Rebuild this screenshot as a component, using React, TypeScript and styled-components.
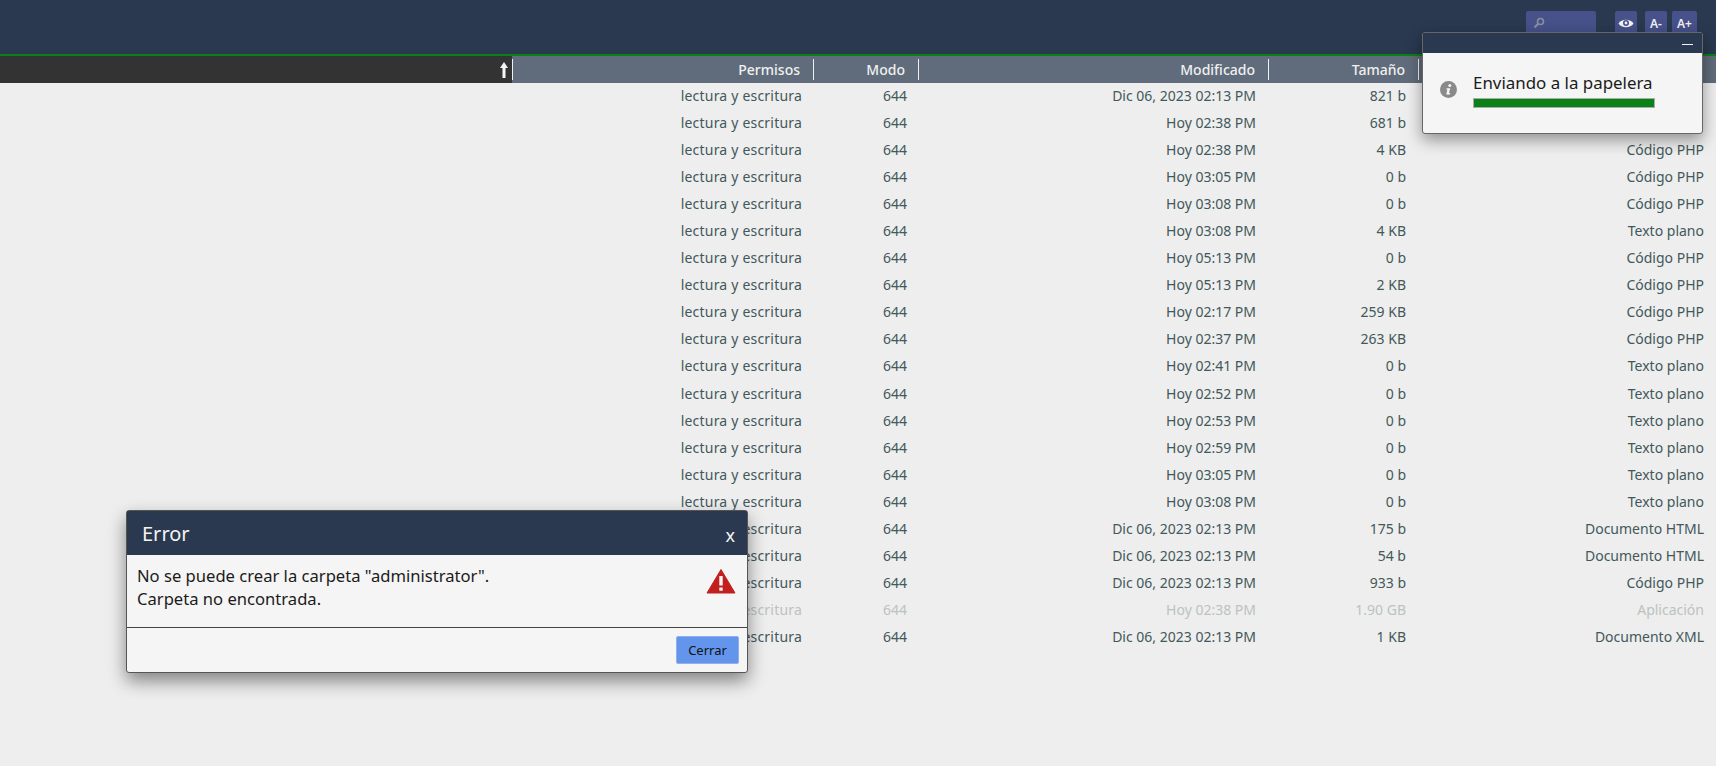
import React from 'react';
import styled, { createGlobalStyle } from 'styled-components';

const GlobalStyle = createGlobalStyle`
  html, body {
    margin: 0;
    padding: 0;
    height: 100%;
    background: #eeeeee;
    font-family: 'Noto Sans', sans-serif;
    overflow: hidden;
  }
`;

const Page = styled.div`
  position: relative;
  width: 1716px;
  height: 766px;
  overflow: hidden;
  background: #eeeeee;
`;

const TopBar = styled.div`
  display: flex;
  justify-content: flex-end;
  align-items: flex-start;
  height: 56px;
  padding: 11px 19px 0 0;
  box-sizing: border-box;
  background: #2a3950;
  border-bottom: 2px solid #0b8016;
`;

const SearchBox = styled.div`
  display: flex;
  align-items: center;
  width: 70px;
  height: 24px;
  padding-left: 7px;
  box-sizing: border-box;
  margin-right: 19px;
  background: #47518a;
  border-radius: 2px;
`;

const ToolButton = styled.div<{ $gap?: number; $w?: number }>`
  display: flex;
  align-items: center;
  justify-content: center;
  width: ${p => p.$w ?? 22}px;
  height: 24px;
  margin-right: ${p => p.$gap ?? 5}px;
  background: #47518a;
  border-radius: 2px;
  color: #f2f2f2;
  font-size: 12px;
  font-weight: 600;
`;

const HeaderRow = styled.div`
  display: flex;
  height: 27px;
`;

const NameHead = styled.div`
  display: flex;
  align-items: center;
  justify-content: flex-end;
  width: 512px;
  box-sizing: border-box;
  padding-right: 4px;
  background: #333333;
`;

const HeadCell = styled.div<{ $w: number }>`
  position: relative;
  width: ${p => p.$w}px;
  box-sizing: border-box;
  padding-right: 13px;
  text-align: right;
  line-height: 27px;
  background: #606c7b;
  color: #f0f0f0;
  font-size: 14px;
  font-weight: 500;
  &::before {
    content: '';
    position: absolute;
    left: 0;
    top: 3px;
    bottom: 3px;
    width: 1px;
    background: #f0f0f0;
  }
`;

const Row = styled.div<{ $faded?: boolean }>`
  display: flex;
  height: 27.05px;
  color: ${p => (p.$faded ? '#bcc2c1' : '#42585a')};
  font-size: 14px;
  line-height: 25px;
`;

const Spacer = styled.div`
  width: 512px;
`;

const Cell = styled.div<{ $w: number; $pad?: number }>`
  width: ${p => p.$w}px;
  box-sizing: border-box;
  padding-right: ${p => p.$pad ?? 12}px;
  text-align: right;
`;

const PermCell = styled(Cell)`
  letter-spacing: 0.2px;
`;

const Dialog = styled.div`
  position: absolute;
  left: 126px;
  top: 510px;
  width: 620px;
  background: #f5f5f5;
  border: 1px solid #555;
  border-radius: 3px;
  box-shadow: 0 8px 18px rgba(0, 0, 0, 0.45);
`;

const DialogTitle = styled.div`
  display: flex;
  justify-content: space-between;
  align-items: center;
  height: 44px;
  padding: 0 12px 0 15px;
  background: #2a3950;
  color: #f4f4f4;
  font-size: 20px;
`;

const CloseMark = styled.span`
  font-size: 18px;
  line-height: 18px;
  margin-top: 4px;
`;

const DialogBody = styled.div`
  display: flex;
  justify-content: space-between;
  height: 73px;
  padding: 9px 11px 0 10px;
  box-sizing: border-box;
  border-bottom: 1px solid #444;
  color: #1b1b1b;
  font-size: 16.6px;
  line-height: 23px;
`;

const WarnIcon = styled.svg`
  margin-top: 4px;
`;

const DialogFoot = styled.div`
  display: flex;
  justify-content: flex-end;
  padding: 8px 8px 8px 0;
`;

const CloseButton = styled.button`
  width: 63px;
  height: 28px;
  padding: 0;
  background: #6495ed;
  border: 1px solid #8fb0ea;
  border-radius: 2px;
  color: #111;
  font: 13px 'Noto Sans', sans-serif;
`;

const Toast = styled.div`
  position: absolute;
  left: 1422px;
  top: 32px;
  width: 281px;
  height: 102px;
  box-sizing: border-box;
  background: #f5f5f5;
  border: 1px solid #666;
  border-radius: 3px;
  box-shadow: 0 6px 16px rgba(0, 0, 0, 0.4);
`;

const ToastHead = styled.div`
  display: flex;
  justify-content: flex-end;
  align-items: center;
  height: 20px;
  padding: 2px 9px 0 0;
  box-sizing: border-box;
  background: #2a3950;
`;

const MinusBar = styled.div`
  width: 11px;
  height: 1px;
  background: #f4f4f4;
`;

const ToastBody = styled.div`
  display: flex;
  align-items: center;
  padding: 18px 0 0 17px;
`;

const ToastText = styled.div`
  margin-left: 16px;
  color: #1b1b1b;
  font-size: 16.9px;
  line-height: 23px;
`;

const Progress = styled.div`
  width: 182px;
  height: 10px;
  margin-top: 4px;
  box-sizing: border-box;
  background: #0b8016;
  border: 1px solid #aaa;
`;

const HeadLabels: [string, number][] = [
  ['Permisos', 301],
  ['Modo', 105],
  ['Modificado', 350],
  ['Tamaño', 150],
];

const rows: [string, string, string, boolean?][] = [
  ['Dic 06, 2023 02:13 PM', '821 b', ''],
  ['Hoy 02:38 PM', '681 b', ''],
  ['Hoy 02:38 PM', '4 KB', 'Código PHP'],
  ['Hoy 03:05 PM', '0 b', 'Código PHP'],
  ['Hoy 03:08 PM', '0 b', 'Código PHP'],
  ['Hoy 03:08 PM', '4 KB', 'Texto plano'],
  ['Hoy 05:13 PM', '0 b', 'Código PHP'],
  ['Hoy 05:13 PM', '2 KB', 'Código PHP'],
  ['Hoy 02:17 PM', '259 KB', 'Código PHP'],
  ['Hoy 02:37 PM', '263 KB', 'Código PHP'],
  ['Hoy 02:41 PM', '0 b', 'Texto plano'],
  ['Hoy 02:52 PM', '0 b', 'Texto plano'],
  ['Hoy 02:53 PM', '0 b', 'Texto plano'],
  ['Hoy 02:59 PM', '0 b', 'Texto plano'],
  ['Hoy 03:05 PM', '0 b', 'Texto plano'],
  ['Hoy 03:08 PM', '0 b', 'Texto plano'],
  ['Dic 06, 2023 02:13 PM', '175 b', 'Documento HTML'],
  ['Dic 06, 2023 02:13 PM', '54 b', 'Documento HTML'],
  ['Dic 06, 2023 02:13 PM', '933 b', 'Código PHP'],
  ['Hoy 02:38 PM', '1.90 GB', 'Aplicación', true],
  ['Dic 06, 2023 02:13 PM', '1 KB', 'Documento XML'],
];

const App: React.FC = () => {
  return (
    <Page>
      <GlobalStyle />
      <TopBar>
        <SearchBox>
          <svg width="12" height="12" viewBox="0 0 12 12" fill="none" stroke="#8a8f9e">
            <circle cx="7.5" cy="4.5" r="3" strokeWidth="1.6" />
            <path d="M5.2 6.8 L1.5 10.5" strokeWidth="2.2" />
          </svg>
        </SearchBox>
        <ToolButton $gap={8}>
          <svg width="16" height="11" viewBox="0 0 16 11">
            <path d="M0.5 5.5 C3.5 0.5 12.5 0.5 15.5 5.5 C12.5 10.5 3.5 10.5 0.5 5.5 Z" fill="#f2f2f2" />
            <circle cx="8" cy="5" r="3" fill="#47518a" />
            <circle cx="8" cy="5" r="1.4" fill="#f2f2f2" />
          </svg>
        </ToolButton>
        <ToolButton>A-</ToolButton>
        <ToolButton $w={25} $gap={0}>A+</ToolButton>
      </TopBar>
      <HeaderRow>
        <NameHead>
          <svg width="8" height="16" viewBox="0 0 8 16">
            <path d="M4 0 L8 6 H5.5 V16 H2.5 V6 H0 Z" fill="#f5f5f5" />
          </svg>
        </NameHead>
        {HeadLabels.map(([label, w]) => (
          <HeadCell key={label} $w={w}>
            {label}
          </HeadCell>
        ))}
        <HeadCell $w={298} />
      </HeaderRow>
      {rows.map((r, i) => (
        <Row key={i} $faded={r[3]}>
          <Spacer />
          <PermCell $w={301} $pad={11}>lectura y escritura</PermCell>
          <Cell $w={105} $pad={11}>644</Cell>
          <Cell $w={350}>{r[0]}</Cell>
          <Cell $w={150}>{r[1]}</Cell>
          <Cell $w={298} $pad={12}>{r[2]}</Cell>
        </Row>
      ))}
      <Dialog>
        <DialogTitle>
          Error
          <CloseMark>x</CloseMark>
        </DialogTitle>
        <DialogBody>
          <div>
            No se puede crear la carpeta "administrator".
            <br />
            Carpeta no encontrada.
          </div>
          <WarnIcon width="30" height="26" viewBox="0 0 30 26">
            <path d="M15 1.5 L29 25 H1 Z" fill="#c21f1f" stroke="#c21f1f" strokeLinejoin="round" />
            <rect x="13.3" y="8" width="3.4" height="9.5" fill="#f5f5f5" />
            <rect x="13.3" y="19.5" width="3.4" height="3.2" fill="#f5f5f5" />
          </WarnIcon>
        </DialogBody>
        <DialogFoot>
          <CloseButton>Cerrar</CloseButton>
        </DialogFoot>
      </Dialog>
      <Toast>
        <ToastHead>
          <MinusBar />
        </ToastHead>
        <ToastBody>
          <svg width="17" height="17" viewBox="0 0 17 17">
            <circle cx="8.5" cy="8.5" r="8.5" fill="#8a8a8a" />
            <circle cx="9.8" cy="4.6" r="1.5" fill="#f5f5f5" />
            <path d="M6.6 7.2 H10.2 L9 12 H10.2 L9.9 13.4 H6.2 L7.4 8.6 H6.3 Z" fill="#f5f5f5" />
          </svg>
          <ToastText>
            Enviando a la papelera
            <Progress />
          </ToastText>
        </ToastBody>
      </Toast>
    </Page>
  );
};

export default App;
